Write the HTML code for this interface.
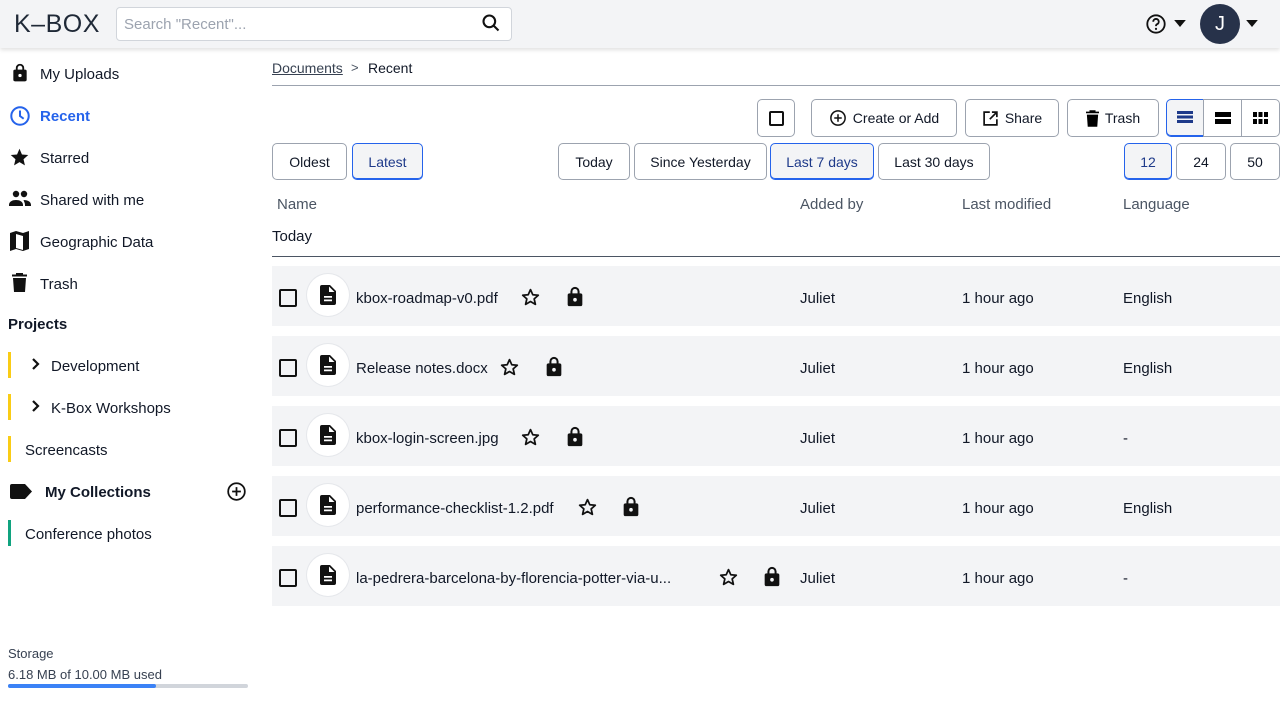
<!DOCTYPE html>
<html><head><meta charset="utf-8"><style>
*{box-sizing:border-box;margin:0;padding:0}
body{width:1280px;height:720px;overflow:hidden;background:#fff;font-family:"Liberation Sans","DejaVu Sans",sans-serif;color:#111827;position:relative;font-size:15px}
.a{position:absolute}
.hdr{left:0;top:0;width:1280px;height:48px;background:#f3f4f6;box-shadow:0 2px 4px rgba(0,0,0,.12)}
.t{position:absolute;white-space:nowrap;line-height:22px}
.ic{position:absolute;fill:#111;}
.btn{position:absolute;border:1px solid #9ca3af;border-radius:5px;background:#fff;font-size:14px;display:flex;align-items:center;justify-content:center;gap:6px;color:#111827}
.btn.on{background:#f3f4f6;border-color:#2563eb;color:#1e3a8a;box-shadow:inset 0 -1px 0 #2563eb}
.row{position:absolute;left:272px;width:1008px;height:60px;background:#f3f4f6}
.cb{position:absolute;left:7px;top:23px;width:18px;height:18px;border:2px solid #111;border-radius:2px}
.circ{position:absolute;left:35px;top:8px;width:42px;height:42px;border-radius:50%;background:#fff;box-shadow:0 0 0 1px #e5e7eb}
.bar{position:absolute;left:8px;width:3px;height:26px}
</style></head><body>
<div class="a hdr"></div>
<div class="t" style="left:14px;top:10px;font-size:25px;line-height:28px;letter-spacing:0.5px;color:#1f2937">K–BOX</div>
<div class="a" style="left:116px;top:7px;width:396px;height:34px;background:#fff;border:1px solid #d1d5db;border-radius:4px"></div>
<div class="t" style="left:124px;top:14px;color:#9ca3af;font-size:15px">Search "Recent"...</div>
<svg class="ic" style="left:481px;top:13px" width="20" height="20" viewBox="0 0 24 24"><path fill="none" stroke="#111" stroke-width="2.5" d="M10 3a7 7 0 1 0 0 14a7 7 0 1 0 0-14zM15 15l6 6"/></svg>
<svg class="ic" style="left:1145px;top:13px" width="22" height="22" viewBox="0 0 24 24"><circle cx="12" cy="12" r="9.5" fill="none" stroke="#111" stroke-width="2"/><path fill="none" stroke="#111" stroke-width="2" d="M9 9.5a3 3 0 1 1 4 2.8c-.8.4-1 1-1 2"/><circle cx="12" cy="17.3" r="1.2"/></svg>
<svg class="ic" style="left:1174px;top:20px" width="12" height="7" viewBox="0 0 10 6"><path d="M0 0h10L5 6z"/></svg>
<div class="a" style="left:1200px;top:4px;width:40px;height:40px;border-radius:50%;background:#27324a;color:#fff;font-size:20px;display:flex;align-items:center;justify-content:center">J</div>
<svg class="ic" style="left:1246px;top:20px" width="12" height="7" viewBox="0 0 10 6"><path d="M0 0h10L5 6z"/></svg>

<!-- sidebar -->
<svg class="ic" style="left:10px;top:62px" width="20" height="22" viewBox="0 0 24 24"><path d="M18 8h-1V6A5 5 0 0 0 7 6v2H6a2 2 0 0 0-2 2v10a2 2 0 0 0 2 2h12a2 2 0 0 0 2-2V10a2 2 0 0 0-2-2zM9.2 6a2.8 2.8 0 0 1 5.6 0v2H9.2zM12 17a2 2 0 1 1 0-4 2 2 0 0 1 0 4z"/></svg>
<div class="t" style="left:40px;top:64px">My Uploads</div>
<svg class="ic" style="left:9px;top:105px" width="22" height="22" viewBox="0 0 24 24"><circle cx="12" cy="12" r="9.5" fill="none" stroke="#2563eb" stroke-width="2.2"/><path fill="none" stroke="#2563eb" stroke-width="2.2" d="M12 6v6l4 3"/></svg>
<div class="t" style="left:40px;top:106px;color:#2563eb;font-weight:bold">Recent</div>
<svg class="ic" style="left:9px;top:147px" width="21" height="21" viewBox="0 0 24 24"><path d="M12 17.3l6.2 3.7-1.6-7L22 9.2l-7.2-.6L12 2 9.2 8.6 2 9.2 7.4 14l-1.6 7z"/></svg>
<div class="t" style="left:40px;top:148px">Starred</div>
<svg class="ic" style="left:8px;top:189px" width="24" height="20" viewBox="0 0 24 20"><circle cx="8" cy="5" r="3.2"/><circle cx="16" cy="5" r="3.2"/><path d="M1 16c0-3.5 3.5-5 7-5s7 1.5 7 5v1H1zM15.5 11c3.5 0 7.5 1.3 7.5 5v1h-6v-1c0-2-1-3.4-1.5-5z"/></svg>
<div class="t" style="left:40px;top:190px">Shared with me</div>
<svg class="ic" style="left:10px;top:231px" width="19" height="20" viewBox="0 0 19 20"><path d="M0 2l6-2 7 2 6-2v18l-6 2-7-2-6 2zM6 3v14l7 2V5z"/></svg>
<div class="t" style="left:40px;top:232px">Geographic Data</div>
<svg class="ic" style="left:12px;top:273px" width="15" height="19" viewBox="0 0 15 19"><path d="M4 0h7v1.5h4v2H0v-2h4zM1 5h13l-1 14H2z"/></svg>
<div class="t" style="left:40px;top:274px">Trash</div>
<div class="t" style="left:8px;top:314px;font-weight:bold">Projects</div>
<div class="bar" style="top:352px;background:#facc15"></div>
<svg class="ic" style="left:31px;top:358px" width="10" height="12" viewBox="0 0 10 12"><path fill="none" stroke="#111" stroke-width="2.2" d="M2 1l5 5-5 5"/></svg>
<div class="t" style="left:51px;top:356px">Development</div>
<div class="bar" style="top:394px;background:#facc15"></div>
<svg class="ic" style="left:31px;top:400px" width="10" height="12" viewBox="0 0 10 12"><path fill="none" stroke="#111" stroke-width="2.2" d="M2 1l5 5-5 5"/></svg>
<div class="t" style="left:51px;top:398px">K-Box Workshops</div>
<div class="bar" style="top:436px;background:#facc15"></div>
<div class="t" style="left:25px;top:440px">Screencasts</div>
<svg class="ic" style="left:10px;top:484px" width="22" height="15" viewBox="0 0 22 15"><path d="M2 0h13l7 7.5-7 7.5H2a2 2 0 0 1-2-2V2a2 2 0 0 1 2-2z"/></svg>
<div class="t" style="left:45px;top:482px;font-weight:bold">My Collections</div>
<svg class="ic" style="left:226px;top:481px" width="21" height="21" viewBox="0 0 24 24"><circle cx="12" cy="12" r="9.5" fill="none" stroke="#111" stroke-width="2"/><path stroke="#111" stroke-width="2" d="M12 7v10M7 12h10"/></svg>
<div class="bar" style="top:520px;background:#10a37f"></div>
<div class="t" style="left:25px;top:524px">Conference photos</div>
<div class="t" style="left:8px;top:643px;font-size:13px;color:#374151">Storage</div>
<div class="t" style="left:8px;top:664px;font-size:13px;color:#374151">6.18 MB of 10.00 MB used</div>
<div class="a" style="left:8px;top:684px;width:240px;height:4px;background:#d1d5db;border-radius:2px"></div>
<div class="a" style="left:8px;top:684px;width:148px;height:4px;background:#3b82f6;border-radius:2px"></div>

<!-- main -->
<div class="t" style="left:272px;top:57px;font-size:14px;text-decoration:underline;color:#374151">Documents</div>
<div class="t" style="left:351px;top:57px;font-size:13px;color:#4b5563">&gt;</div>
<div class="t" style="left:368px;top:57px;font-size:14px">Recent</div>
<div class="a" style="left:272px;top:85px;width:1008px;height:1px;background:#9ca3af"></div>

<div class="btn" style="left:757px;top:99px;width:38px;height:38px"><div style="width:15px;height:15px;border:2px solid #111;border-radius:2px"></div></div>
<div class="btn" style="left:811px;top:99px;width:146px;height:38px"><svg width="18" height="18" viewBox="0 0 24 24"><circle cx="12" cy="12" r="9.5" fill="none" stroke="#111" stroke-width="2"/><path stroke="#111" stroke-width="2" d="M12 7v10M7 12h10"/></svg>Create or Add</div>
<div class="btn" style="left:965px;top:99px;width:94px;height:38px"><svg width="17" height="17" viewBox="0 0 24 24"><path fill="none" stroke="#111" stroke-width="2.4" d="M11 3H3v18h18v-8M14 3h7v7M21 3L11 13"/></svg>Share</div>
<div class="btn" style="left:1067px;top:99px;width:92px;height:38px"><svg width="13" height="17" viewBox="0 0 15 19"><path d="M4 0h7v1.5h4v2H0v-2h4zM1 5h13l-1 14H2z"/></svg>Trash</div>
<div class="btn on" style="left:1166px;top:99px;width:38px;height:38px;border-radius:5px 0 0 5px"><svg width="16" height="14" viewBox="0 0 16 14" fill="#1e3a8a"><rect y="0" width="16" height="3"/><rect y="4.5" width="16" height="3"/><rect y="9" width="16" height="3"/></svg></div>
<div class="btn" style="left:1203px;top:99px;width:39px;height:38px;border-radius:0"><svg width="16" height="12" viewBox="0 0 16 12"><rect width="16" height="5"/><rect y="7" width="16" height="5"/></svg></div>
<div class="btn" style="left:1241px;top:99px;width:39px;height:38px;border-radius:0 5px 5px 0"><svg width="15" height="12" viewBox="0 0 15 12"><rect width="4" height="5"/><rect x="5.5" width="4" height="5"/><rect x="11" width="4" height="5"/><rect y="7" width="4" height="5"/><rect x="5.5" y="7" width="4" height="5"/><rect x="11" y="7" width="4" height="5"/></svg></div>

<div class="btn" style="left:272px;top:143px;width:75px;height:37px">Oldest</div>
<div class="btn on" style="left:352px;top:143px;width:71px;height:37px">Latest</div>
<div class="btn" style="left:558px;top:143px;width:72px;height:37px">Today</div>
<div class="btn" style="left:634px;top:143px;width:133px;height:37px">Since Yesterday</div>
<div class="btn on" style="left:770px;top:143px;width:104px;height:37px">Last 7 days</div>
<div class="btn" style="left:878px;top:143px;width:112px;height:37px">Last 30 days</div>
<div class="btn on" style="left:1124px;top:143px;width:48px;height:37px">12</div>
<div class="btn" style="left:1176px;top:143px;width:50px;height:37px">24</div>
<div class="btn" style="left:1230px;top:143px;width:50px;height:37px">50</div>

<div class="t" style="left:277px;top:194px;color:#4b5563">Name</div>
<div class="t" style="left:800px;top:194px;color:#4b5563">Added by</div>
<div class="t" style="left:962px;top:194px;color:#4b5563">Last modified</div>
<div class="t" style="left:1123px;top:194px;color:#4b5563">Language</div>
<div class="t" style="left:272px;top:226px">Today</div>
<div class="a" style="left:272px;top:256px;width:1008px;height:1px;background:#4b5563"></div>

<svg width="0" height="0" style="position:absolute"><defs>
<symbol id="doc" viewBox="0 0 16 20"><path d="M2 0h8l6 6v12a2 2 0 0 1-2 2H2a2 2 0 0 1-2-2V2a2 2 0 0 1 2-2zM9 1.5V7h5.5zM4 11v1.8h8V11zM4 14.5v1.8h8v-1.8z" fill-rule="evenodd"/></symbol>
<symbol id="star" viewBox="0 0 24 24"><path fill="none" stroke="#111" stroke-width="2" stroke-linejoin="round" d="M12 3l2.6 5.8 6.3.6-4.7 4.2 1.4 6.2L12 16.6l-5.6 3.2 1.4-6.2L3.1 9.4l6.3-.6z"/></symbol>
<symbol id="lock" viewBox="0 0 24 24"><path d="M18 8h-1V6A5 5 0 0 0 7 6v2H6a2 2 0 0 0-2 2v10a2 2 0 0 0 2 2h12a2 2 0 0 0 2-2V10a2 2 0 0 0-2-2zM9.2 6a2.8 2.8 0 0 1 5.6 0v2H9.2zM12 17a2 2 0 1 1 0-4 2 2 0 0 1 0 4z"/></symbol>
</defs></svg>

<div class="row" style="top:266px"><div class="cb"></div><div class="circ"></div><svg class="ic" style="left:48px;top:19px" width="16" height="20"><use href="#doc"/></svg><div class="t" style="left:84px;top:22px">kbox-roadmap-v0.pdf</div><svg class="ic" style="left:248px;top:21px" width="21" height="21"><use href="#star"/></svg><svg class="ic" style="left:292px;top:20px" width="22" height="22"><use href="#lock"/></svg><div class="t" style="left:528px;top:22px">Juliet</div><div class="t" style="left:690px;top:22px">1 hour ago</div><div class="t" style="left:851px;top:22px">English</div></div>
<div class="row" style="top:336px"><div class="cb"></div><div class="circ"></div><svg class="ic" style="left:48px;top:19px" width="16" height="20"><use href="#doc"/></svg><div class="t" style="left:84px;top:22px">Release notes.docx</div><svg class="ic" style="left:227px;top:21px" width="21" height="21"><use href="#star"/></svg><svg class="ic" style="left:271px;top:20px" width="22" height="22"><use href="#lock"/></svg><div class="t" style="left:528px;top:22px">Juliet</div><div class="t" style="left:690px;top:22px">1 hour ago</div><div class="t" style="left:851px;top:22px">English</div></div>
<div class="row" style="top:406px"><div class="cb"></div><div class="circ"></div><svg class="ic" style="left:48px;top:19px" width="16" height="20"><use href="#doc"/></svg><div class="t" style="left:84px;top:22px">kbox-login-screen.jpg</div><svg class="ic" style="left:248px;top:21px" width="21" height="21"><use href="#star"/></svg><svg class="ic" style="left:292px;top:20px" width="22" height="22"><use href="#lock"/></svg><div class="t" style="left:528px;top:22px">Juliet</div><div class="t" style="left:690px;top:22px">1 hour ago</div><div class="t" style="left:851px;top:22px">-</div></div>
<div class="row" style="top:476px"><div class="cb"></div><div class="circ"></div><svg class="ic" style="left:48px;top:19px" width="16" height="20"><use href="#doc"/></svg><div class="t" style="left:84px;top:22px">performance-checklist-1.2.pdf</div><svg class="ic" style="left:305px;top:21px" width="21" height="21"><use href="#star"/></svg><svg class="ic" style="left:348px;top:20px" width="22" height="22"><use href="#lock"/></svg><div class="t" style="left:528px;top:22px">Juliet</div><div class="t" style="left:690px;top:22px">1 hour ago</div><div class="t" style="left:851px;top:22px">English</div></div>
<div class="row" style="top:546px"><div class="cb"></div><div class="circ"></div><svg class="ic" style="left:48px;top:19px" width="16" height="20"><use href="#doc"/></svg><div class="t" style="left:84px;top:22px">la-pedrera-barcelona-by-florencia-potter-via-u...</div><svg class="ic" style="left:446px;top:21px" width="21" height="21"><use href="#star"/></svg><svg class="ic" style="left:489px;top:20px" width="22" height="22"><use href="#lock"/></svg><div class="t" style="left:528px;top:22px">Juliet</div><div class="t" style="left:690px;top:22px">1 hour ago</div><div class="t" style="left:851px;top:22px">-</div></div>
</body></html>
